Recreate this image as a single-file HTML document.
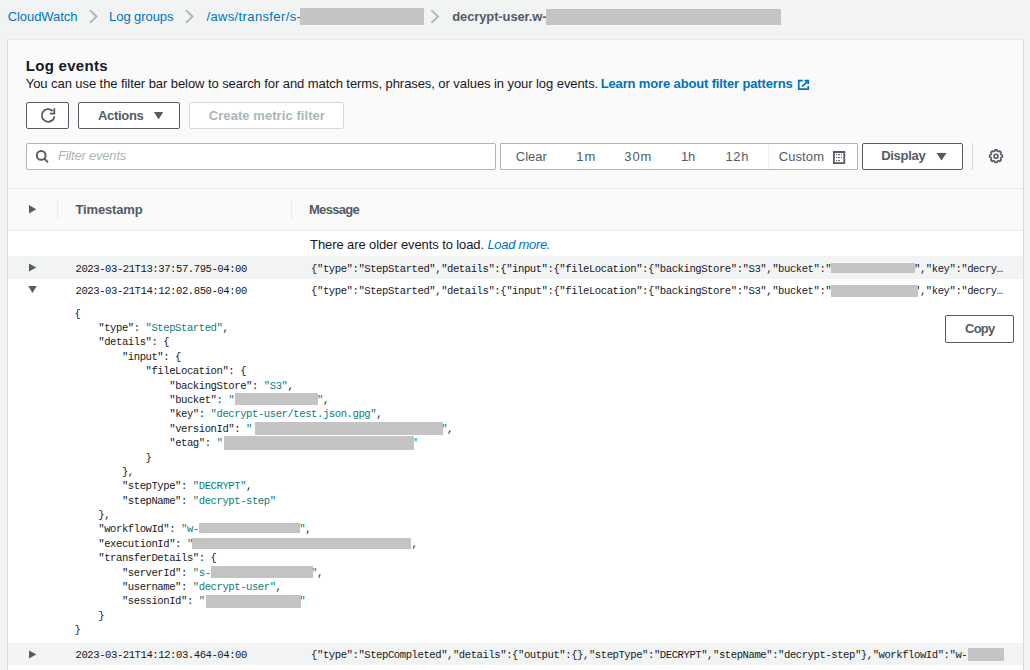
<!DOCTYPE html><html><head><meta charset="utf-8"><style>
html,body{margin:0;padding:0}
body{width:1030px;height:670px;overflow:hidden;background:#f2f3f3;position:relative;font-family:"Liberation Sans",sans-serif}
.t{position:absolute;line-height:1;white-space:pre}
.b{position:absolute;box-sizing:border-box}
.mono{position:absolute;font-family:"Liberation Mono",monospace;white-space:pre;line-height:1}
</style></head><body>
<div class="t" style="left:7.70px;top:10.00px;font-family:'Liberation Sans',sans-serif;font-size:13px;font-weight:400;font-style:normal;letter-spacing:-0.067px;color:#0073bb;">CloudWatch</div>
<svg class="b" style="left:84px;top:5px" width="20" height="23" viewBox="84 5 20 23"><path d="M89.9,10.1 L96.5,16.5 L89.9,22.9" fill="none" stroke="#aab7b8" stroke-width="1.8"/></svg>
<div class="t" style="left:109.10px;top:10.00px;font-family:'Liberation Sans',sans-serif;font-size:13px;font-weight:400;font-style:normal;letter-spacing:-0.078px;color:#0073bb;">Log groups</div>
<svg class="b" style="left:180px;top:5px" width="20" height="23" viewBox="180 5 20 23"><path d="M185.9,10.1 L192.5,16.5 L185.9,22.9" fill="none" stroke="#aab7b8" stroke-width="1.8"/></svg>
<div class="t" style="left:206.40px;top:10.00px;font-family:'Liberation Sans',sans-serif;font-size:13px;font-weight:400;font-style:normal;letter-spacing:0.373px;color:#0073bb;">/aws/transfer/s-</div>
<div class="b" style="left:300px;top:8px;width:124px;height:17px;background:#c4c4c4;"></div>
<svg class="b" style="left:426px;top:5px" width="20" height="23" viewBox="426 5 20 23"><path d="M431.4,10.1 L438,16.5 L431.4,22.9" fill="none" stroke="#aab7b8" stroke-width="1.8"/></svg>
<div class="t" style="left:452.20px;top:10.00px;font-family:'Liberation Sans',sans-serif;font-size:13px;font-weight:700;font-style:normal;letter-spacing:-0.114px;color:#545b64;">decrypt-user.w-</div>
<div class="b" style="left:546px;top:9px;width:235px;height:16px;background:#c4c4c4;"></div>
<div class="b" style="left:7px;top:39px;width:1017px;height:700px;background:#fafafa;border-top:1px solid #eaeded;border-left:1px solid #d5dbdb;border-right:1px solid #d5dbdb"></div>
<div class="t" style="left:25.80px;top:58.30px;font-family:'Liberation Sans',sans-serif;font-size:15px;font-weight:700;font-style:normal;letter-spacing:0.289px;color:#16191f;">Log events</div>
<div class="t" style="left:25.80px;top:77.00px;font-family:'Liberation Sans',sans-serif;font-size:13px;font-weight:400;font-style:normal;letter-spacing:-0.073px;color:#16191f;">You can use the filter bar below to search for and match terms, phrases, or values in your log events.</div>
<div class="t" style="left:600.70px;top:77.00px;font-family:'Liberation Sans',sans-serif;font-size:13px;font-weight:700;font-style:normal;letter-spacing:-0.142px;color:#0073bb;">Learn more about filter patterns</div>
<svg class="b" style="left:795px;top:77px" width="16" height="16" viewBox="795 77 16 16"><g fill="none" stroke="#0073bb" stroke-width="1.7"><path d="M802.8,80.7 H798.75 V89.05 H808.25 V86"/><path d="M804.4,80.7 H808.25 V84.2"/><path d="M802.2,86.4 L807.8,81.1"/></g></svg>
<div class="b" style="left:26px;top:102px;width:43px;height:27px;background:#fff;border:1px solid #545b64;border-radius:2px"></div>
<svg class="b" style="left:38px;top:105px" width="20" height="20" viewBox="38 105 20 20"><g fill="none" stroke="#545b64" stroke-width="1.8"><path d="M54.4,116.3 A6.3,6.3 0 1 1 52.6,111"/><path d="M54.3,108.2 V113.6 H49.9"/></g></svg>
<div class="b" style="left:78px;top:102px;width:102px;height:27px;background:#fff;border:1px solid #545b64;border-radius:2px"></div>
<div class="t" style="left:97.90px;top:109.00px;font-family:'Liberation Sans',sans-serif;font-size:13px;font-weight:700;font-style:normal;letter-spacing:-0.3px;color:#545b64;">Actions</div>
<svg class="b" style="left:150px;top:108px" width="18" height="16" viewBox="150 108 18 16"><path d="M154,112 H163.2 L158.6,119.4 Z" fill="#545b64"/></svg>
<div class="b" style="left:189px;top:102px;width:155px;height:27px;background:#fff;border:1px solid #d5dbdb;border-radius:2px"></div>
<div class="t" style="left:208.80px;top:109.00px;font-family:'Liberation Sans',sans-serif;font-size:13px;font-weight:700;font-style:normal;letter-spacing:0.063px;color:#aab7b8;">Create metric filter</div>
<div class="b" style="left:26px;top:143px;width:470px;height:27px;background:#fff;border:1px solid #aab7b8;border-radius:2px"></div>
<svg class="b" style="left:30px;top:145px" width="24" height="24" viewBox="30 145 24 24"><g fill="none" stroke="#545b64" stroke-width="1.9"><circle cx="41.2" cy="155.4" r="4.4"/><path d="M44.6,158.8 L48,162.4"/></g></svg>
<div class="t" style="left:57.90px;top:149.00px;font-family:'Liberation Sans',sans-serif;font-size:13px;font-weight:400;font-style:italic;letter-spacing:-0.2px;color:#aab7b8;">Filter events</div>
<div class="b" style="left:500px;top:143px;width:358px;height:27px;background:#fff;border:1px solid #aab7b8;border-radius:1px"></div>
<div class="t" style="left:515.80px;top:150.00px;font-family:'Liberation Sans',sans-serif;font-size:13px;font-weight:400;font-style:normal;letter-spacing:-0.025px;color:#545b64;">Clear</div>
<div class="t" style="left:576.20px;top:150.00px;font-family:'Liberation Sans',sans-serif;font-size:13px;font-weight:400;font-style:normal;letter-spacing:1.0px;color:#545b64;">1m</div>
<div class="t" style="left:624.30px;top:150.00px;font-family:'Liberation Sans',sans-serif;font-size:13px;font-weight:400;font-style:normal;letter-spacing:0.85px;color:#545b64;">30m</div>
<div class="t" style="left:681.00px;top:150.00px;font-family:'Liberation Sans',sans-serif;font-size:13px;font-weight:400;font-style:normal;letter-spacing:-0.3px;color:#545b64;">1h</div>
<div class="t" style="left:725.40px;top:150.00px;font-family:'Liberation Sans',sans-serif;font-size:13px;font-weight:400;font-style:normal;letter-spacing:0.65px;color:#545b64;">12h</div>
<div class="t" style="left:778.70px;top:150.00px;font-family:'Liberation Sans',sans-serif;font-size:13px;font-weight:400;font-style:normal;letter-spacing:0.1px;color:#545b64;">Custom</div>
<div class="b" style="left:768px;top:144px;width:1px;height:25px;background:#eaeded;"></div>
<svg class="b" style="left:830px;top:148px" width="20" height="20" viewBox="830 148 20 20"><path d="M834.9,152 H844.3 V163.2 H833.9 V152 Z" fill="none" stroke="#545b64" stroke-width="1.8"/><rect x="833" y="151" width="12" height="2" fill="#545b64"/><g fill="#545b64" opacity="0.85"><rect x="836" y="154" width="1" height="1.2"/><rect x="838" y="154" width="2" height="1.2"/><rect x="841" y="154" width="1" height="1.2"/><rect x="836" y="157" width="1" height="1.2"/><rect x="838" y="157" width="2" height="1.2"/><rect x="841" y="157" width="1" height="1.2"/><rect x="836" y="160" width="1" height="1.2"/><rect x="838" y="160" width="2" height="1.2"/></g></svg>
<div class="b" style="left:862px;top:143px;width:101px;height:27px;background:#fff;border:1px solid #545b64;border-radius:2px"></div>
<div class="t" style="left:881.20px;top:149.00px;font-family:'Liberation Sans',sans-serif;font-size:13px;font-weight:700;font-style:normal;letter-spacing:-0.283px;color:#545b64;">Display</div>
<svg class="b" style="left:930px;top:148px" width="20" height="16" viewBox="930 148 20 16"><path d="M936.5,153 H946.5 L941.5,160.5 Z" fill="#545b64"/></svg>
<div class="b" style="left:972px;top:143px;width:1px;height:27px;background:#d5dbdb;"></div>
<svg class="b" style="left:985px;top:145px" width="22" height="22" viewBox="985 145 22 22"><g fill="none" stroke="#545b64" stroke-width="1.6"><path d="M994.72,151.06 L995.00,149.88 L997.00,149.88 L997.28,151.06 L998.73,151.66 L999.76,151.02 L1001.18,152.44 L1000.54,153.47 L1001.14,154.92 L1002.32,155.20 L1002.32,157.20 L1001.14,157.48 L1000.54,158.93 L1001.18,159.96 L999.76,161.38 L998.73,160.74 L997.28,161.34 L997.00,162.52 L995.00,162.52 L994.72,161.34 L993.27,160.74 L992.24,161.38 L990.82,159.96 L991.46,158.93 L990.86,157.48 L989.68,157.20 L989.68,155.20 L990.86,154.92 L991.46,153.47 L990.82,152.44 L992.24,151.02 L993.27,151.66Z"/><circle cx="996" cy="156.2" r="2"/></g></svg>
<div class="b" style="left:8px;top:188px;width:1015px;height:1px;background:#eaeded;"></div>
<div class="b" style="left:8px;top:230px;width:1015px;height:1px;background:#eaeded;"></div>
<svg class="b" style="left:25px;top:200px" width="16" height="18" viewBox="25 200 16 18"><path d="M29,205 V213.5 L36.2,209.2 Z" fill="#545b64"/></svg>
<div class="b" style="left:57px;top:199px;width:1px;height:21px;background:#eaeded;"></div>
<div class="t" style="left:75.50px;top:203.00px;font-family:'Liberation Sans',sans-serif;font-size:13px;font-weight:700;font-style:normal;letter-spacing:-0.15px;color:#545b64;">Timestamp</div>
<div class="b" style="left:291px;top:199px;width:1px;height:21px;background:#eaeded;"></div>
<div class="t" style="left:309.00px;top:203.00px;font-family:'Liberation Sans',sans-serif;font-size:13px;font-weight:700;font-style:normal;letter-spacing:-0.717px;color:#545b64;">Message</div>
<div class="b" style="left:8px;top:231px;width:1015px;height:25px;background:#fff;"></div>
<div class="t" style="left:310.10px;top:238.00px;font-family:'Liberation Sans',sans-serif;font-size:13px;font-weight:400;font-style:normal;letter-spacing:-0.103px;color:#16191f;">There are older events to load.</div>
<div class="t" style="left:487.40px;top:238.00px;font-family:'Liberation Sans',sans-serif;font-size:13px;font-weight:400;font-style:italic;letter-spacing:-0.3px;color:#0073bb;">Load more.</div>
<div class="b" style="left:8px;top:256px;width:1015px;height:23px;background:#f2f3f3;"></div>
<svg class="b" style="left:25px;top:256px" width="16" height="23" viewBox="25 256 16 23"><path d="M29,263.4 V271.6 L36.2,267.5 Z" fill="#545b64"/></svg>
<div class="mono" style="left:75.50px;top:264.00px;font-size:10.6px;letter-spacing:-0.4464px;color:#16191f;">2023-03-21T13:37:57.795-04:00</div>
<div class="mono" style="left:311.10px;top:264.00px;font-size:10.6px;letter-spacing:-0.4464px;color:#16191f;width:693.5px;overflow:hidden;text-overflow:ellipsis">{&quot;type&quot;:&quot;StepStarted&quot;,&quot;details&quot;:{&quot;input&quot;:{&quot;fileLocation&quot;:{&quot;backingStore&quot;:&quot;S3&quot;,&quot;bucket&quot;:&quot;xxxxxxxxxxxxxx&quot;,&quot;key&quot;:&quot;decrypt-user/test.json.gpg&quot;,&quot;versionId&quot;:&quot;x&quot;}}}}</div>
<div class="b" style="left:831px;top:263px;width:84px;height:10px;background:#c4c4c4;"></div>
<div class="b" style="left:8px;top:279px;width:1015px;height:364px;background:#fff;"></div>
<svg class="b" style="left:25px;top:279px" width="16" height="364" viewBox="25 279 16 364"><path d="M28.3,286 H36.7 L32.5,293 Z" fill="#545b64"/></svg>
<div class="mono" style="left:75.50px;top:286.00px;font-size:10.6px;letter-spacing:-0.4464px;color:#16191f;">2023-03-21T14:12:02.850-04:00</div>
<div class="mono" style="left:311.10px;top:286.00px;font-size:10.6px;letter-spacing:-0.4464px;color:#16191f;width:693.5px;overflow:hidden;text-overflow:ellipsis">{&quot;type&quot;:&quot;StepStarted&quot;,&quot;details&quot;:{&quot;input&quot;:{&quot;fileLocation&quot;:{&quot;backingStore&quot;:&quot;S3&quot;,&quot;bucket&quot;:&quot;xxxxxxxxxxxxxx&quot;,&quot;key&quot;:&quot;decrypt-user/test.json.gpg&quot;,&quot;versionId&quot;:&quot;x&quot;}}}}</div>
<div class="b" style="left:831px;top:285px;width:87px;height:12px;background:#c4c4c4;"></div>
<div class="mono" style="left:74.60px;top:308.60px;font-size:10.6px;letter-spacing:-0.4464px;color:#16191f;">{</div>
<div class="mono" style="left:98.25px;top:322.99px;font-size:10.6px;letter-spacing:-0.4464px;color:#16191f;"><span>"type"</span>: <span style="color:#0f7b76">"StepStarted"</span>,</div>
<div class="mono" style="left:98.25px;top:337.38px;font-size:10.6px;letter-spacing:-0.4464px;color:#16191f;"><span>"details"</span>: {</div>
<div class="mono" style="left:121.91px;top:351.77px;font-size:10.6px;letter-spacing:-0.4464px;color:#16191f;"><span>"input"</span>: {</div>
<div class="mono" style="left:145.56px;top:366.16px;font-size:10.6px;letter-spacing:-0.4464px;color:#16191f;"><span>"fileLocation"</span>: {</div>
<div class="mono" style="left:169.22px;top:380.55px;font-size:10.6px;letter-spacing:-0.4464px;color:#16191f;"><span>"backingStore"</span>: <span style="color:#0f7b76">"S3"</span>,</div>
<div class="mono" style="left:169.22px;top:394.94px;font-size:10.6px;letter-spacing:-0.4464px;color:#16191f;"><span>"bucket"</span>: <span style="color:#0f7b76">"              "</span>,</div>
<div class="mono" style="left:169.22px;top:409.33px;font-size:10.6px;letter-spacing:-0.4464px;color:#16191f;"><span>"key"</span>: <span style="color:#0f7b76">"decrypt-user/test.json.gpg"</span>,</div>
<div class="mono" style="left:169.22px;top:423.72px;font-size:10.6px;letter-spacing:-0.4464px;color:#16191f;"><span>"versionId"</span>: <span style="color:#0f7b76">"                                "</span>,</div>
<div class="mono" style="left:169.22px;top:438.11px;font-size:10.6px;letter-spacing:-0.4464px;color:#16191f;"><span>"etag"</span>: <span style="color:#0f7b76">"                                "</span></div>
<div class="mono" style="left:145.56px;top:452.50px;font-size:10.6px;letter-spacing:-0.4464px;color:#16191f;">}</div>
<div class="mono" style="left:121.91px;top:466.89px;font-size:10.6px;letter-spacing:-0.4464px;color:#16191f;">},</div>
<div class="mono" style="left:121.91px;top:481.28px;font-size:10.6px;letter-spacing:-0.4464px;color:#16191f;"><span>"stepType"</span>: <span style="color:#0f7b76">"DECRYPT"</span>,</div>
<div class="mono" style="left:121.91px;top:495.67px;font-size:10.6px;letter-spacing:-0.4464px;color:#16191f;"><span>"stepName"</span>: <span style="color:#0f7b76">"decrypt-step"</span></div>
<div class="mono" style="left:98.25px;top:510.06px;font-size:10.6px;letter-spacing:-0.4464px;color:#16191f;">},</div>
<div class="mono" style="left:98.25px;top:524.45px;font-size:10.6px;letter-spacing:-0.4464px;color:#16191f;"><span>"workflowId"</span>: <span style="color:#0f7b76">"w-                 "</span>,</div>
<div class="mono" style="left:98.25px;top:538.84px;font-size:10.6px;letter-spacing:-0.4464px;color:#16191f;"><span>"executionId"</span>: <span style="color:#0f7b76">"                                    "</span>,</div>
<div class="mono" style="left:98.25px;top:553.23px;font-size:10.6px;letter-spacing:-0.4464px;color:#16191f;"><span>"transferDetails"</span>: {</div>
<div class="mono" style="left:121.91px;top:567.62px;font-size:10.6px;letter-spacing:-0.4464px;color:#16191f;"><span>"serverId"</span>: <span style="color:#0f7b76">"s-                 "</span>,</div>
<div class="mono" style="left:121.91px;top:582.01px;font-size:10.6px;letter-spacing:-0.4464px;color:#16191f;"><span>"username"</span>: <span style="color:#0f7b76">"decrypt-user"</span>,</div>
<div class="mono" style="left:121.91px;top:596.40px;font-size:10.6px;letter-spacing:-0.4464px;color:#16191f;"><span>"sessionId"</span>: <span style="color:#0f7b76">"                "</span></div>
<div class="mono" style="left:98.25px;top:610.79px;font-size:10.6px;letter-spacing:-0.4464px;color:#16191f;">}</div>
<div class="mono" style="left:74.60px;top:625.18px;font-size:10.6px;letter-spacing:-0.4464px;color:#16191f;">}</div>
<div class="b" style="left:235px;top:393px;width:83px;height:12px;background:#c4c4c4;"></div>
<div class="b" style="left:255px;top:422px;width:188px;height:13px;background:#c4c4c4;"></div>
<div class="b" style="left:224px;top:436px;width:190px;height:14px;background:#c4c4c4;"></div>
<div class="b" style="left:199px;top:523px;width:101px;height:10px;background:#c4c4c4;"></div>
<div class="b" style="left:192px;top:538px;width:219px;height:11px;background:#c4c4c4;"></div>
<div class="b" style="left:211px;top:566px;width:102px;height:12px;background:#c4c4c4;"></div>
<div class="b" style="left:206px;top:595px;width:95px;height:13px;background:#c4c4c4;"></div>
<div class="b" style="left:945px;top:315px;width:69px;height:28px;background:#fff;border:1px solid #545b64;border-radius:2px"></div>
<div class="t" style="left:965.00px;top:322.00px;font-family:'Liberation Sans',sans-serif;font-size:13px;font-weight:700;font-style:normal;letter-spacing:-0.733px;color:#545b64;">Copy</div>
<div class="b" style="left:8px;top:643px;width:1015px;height:22px;background:#f2f3f3;"></div>
<svg class="b" style="left:25px;top:643px" width="16" height="22" viewBox="25 643 16 22"><path d="M29,650.4 V658.6 L36.2,654.5 Z" fill="#545b64"/></svg>
<div class="mono" style="left:75.50px;top:650.00px;font-size:10.6px;letter-spacing:-0.4464px;color:#16191f;">2023-03-21T14:12:03.464-04:00</div>
<div class="mono" style="left:311.10px;top:650.00px;font-size:10.6px;letter-spacing:-0.4464px;color:#16191f;width:693.5px;overflow:hidden;text-overflow:ellipsis">{&quot;type&quot;:&quot;StepCompleted&quot;,&quot;details&quot;:{&quot;output&quot;:{},&quot;stepType&quot;:&quot;DECRYPT&quot;,&quot;stepName&quot;:&quot;decrypt-step&quot;},&quot;workflowId&quot;:&quot;w-</div>
<div class="b" style="left:968px;top:648px;width:36px;height:13px;background:#c4c4c4;"></div>
<div class="b" style="left:8px;top:665px;width:1015px;height:5px;background:#fff;"></div>
</body></html>
